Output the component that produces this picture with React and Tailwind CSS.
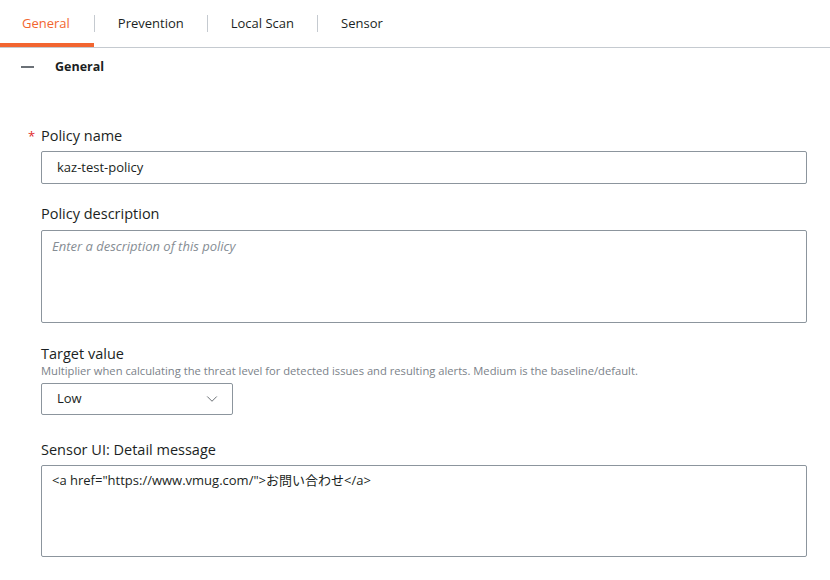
import { ChevronDown } from 'lucide-react'

const tabs = ['General', 'Prevention', 'Local Scan', 'Sensor']

function Tabs() {
  return (
    <div className="flex h-[48px] border-b border-[#c5cad0]">
      {tabs.map((t, i) => (
        <div key={t} className="flex items-center">
          {i > 0 && <div className="w-px h-[17px] bg-[#c5cad0]" />}
          <div
            className={
              'h-full flex items-center text-[13px] ' +
              (i === 0
                ? 'text-[#f26530] border-b-[4px] border-[#f26530] pt-[4px] pl-[22px] pr-[24px]'
                : 'text-[#1b1f23] px-[23px]')
            }
          >
            {t}
          </div>
        </div>
      ))}
    </div>
  )
}

function Label({ children, required, tight }) {
  return (
    <div className={'flex items-center text-[14.5px] text-[#1b1f23] ' + (tight ? 'leading-[18px]' : 'leading-[20px]')}>
      {required && <span className="text-[#e02a2a] w-[13px] -ml-[13px] text-[13px]">*</span>}
      {children}
    </div>
  )
}

export default function App() {
  return (
    <div className="w-[830px] h-[580px] bg-white overflow-hidden" style={{ fontFamily: '"Open Sans", "Noto Sans CJK JP", sans-serif' }}>
      <Tabs />
      <div className="flex items-center h-[38px] pl-[21px]">
        <div className="w-[13px] h-[2px] bg-[#6b7177]" />
        <span className="ml-[21px] text-[12.5px] font-bold text-[#1b1f23]">General</span>
      </div>

      <div className="pl-[41px] pr-[23px] pt-[40px]">
        <Label required>Policy name</Label>
        <div className="mt-[5px] h-[33px] border border-[#8c959d] rounded-[2px] flex items-center px-[15px] text-[13px] text-[#1b1f23]">
          kaz-test-policy
        </div>

        <div className="mt-[20px]">
          <Label>Policy description</Label>
        </div>
        <div className="mt-[6px] h-[93px] border border-[#8c959d] rounded-[2px] px-[10px] pt-[6px] text-[13px] italic text-[#868d94]">
          Enter a description of this policy
        </div>

        <div className="mt-[22px]">
          <Label tight>Target value</Label>
        </div>
        <div className="text-[11.2px] text-[#7b8289] leading-[13px] pt-[1px]">
          Multiplier when calculating the threat level for detected issues and resulting alerts. Medium is the baseline/default.
        </div>
        <div className="mt-[6px] w-[192px] h-[32px] border border-[#8c959d] rounded-[2px] flex items-center justify-between pl-[15px] pr-[11px] text-[13px] text-[#1b1f23]">
          <span>Low</span>
          <ChevronDown size={18} strokeWidth={1.1} className="text-[#4a5056]" />
        </div>

        <div className="mt-[25px]">
          <Label>Sensor UI: Detail message</Label>
        </div>
        <div className="mt-[5px] h-[92px] border border-[#8c959d] rounded-[2px] px-[10px] pt-[5px] text-[13px] text-[#1b1f23]">
          {'<a href="https://www.vmug.com/">お問い合わせ</a>'}
        </div>
      </div>
    </div>
  )
}
